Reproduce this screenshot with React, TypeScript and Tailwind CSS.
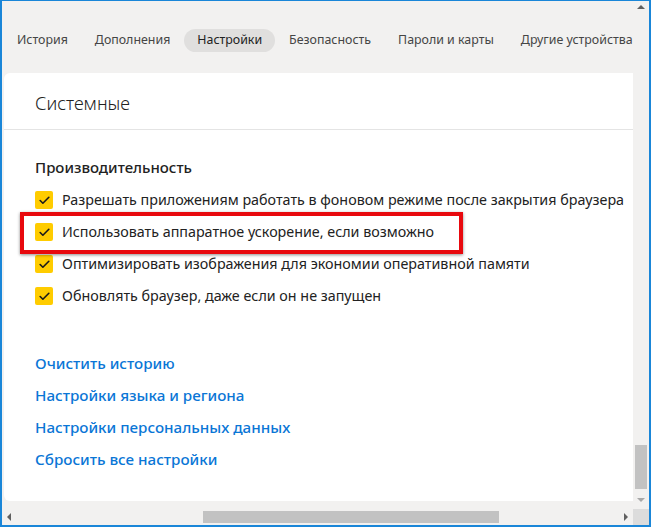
import { Check } from 'lucide-react';

const tabs = ['История', 'Дополнения', 'Настройки', 'Безопасность', 'Пароли и карты', 'Другие устройства'];

const options = [
  'Разрешать приложениям работать в фоновом режиме после закрытия браузера',
  'Использовать аппаратное ускорение, если возможно',
  'Оптимизировать изображения для экономии оперативной памяти',
  'Обновлять браузер, даже если он не запущен',
];

const links = [
  'Очистить историю',
  'Настройки языка и региона',
  'Настройки персональных данных',
  'Сбросить все настройки',
];

export default function App() {
  return (
    <div
      className="relative w-[651px] h-[527px] overflow-hidden bg-[#f2f1f0] border-l-2 border-r-2 border-t border-b-2 border-[#1a86d8] grid grid-cols-[1fr_16px] grid-rows-[1fr_16px]"
      style={{ fontFamily: '"Noto Sans", "Open Sans", sans-serif' }}
    >
      {/* Scrollable content */}
      <div className="flex flex-col min-h-0 min-w-0 overflow-hidden">
        {/* Tabs */}
        <nav className="flex items-center gap-[1px] h-[72px] pl-[2px] pt-[6px] text-[12.4px] text-[#454545] whitespace-nowrap">
          {tabs.map((t) => (
            <div
              key={t}
              className={`px-[13px] h-[23px] flex items-center rounded-full ${
                t === 'Настройки' ? 'bg-[#e0dfde] text-[#222]' : ''
              }`}
            >
              {t}
            </div>
          ))}
        </nav>

        {/* Card */}
        <div className="ml-[2px] mb-[8px] flex-1 bg-white rounded-l-[6px] flex flex-col">
          <div className="h-[56px] flex items-center pt-[4px] pl-[31px] text-[18px] font-light text-[#222]">
            Системные
          </div>
          <div className="h-px bg-[#e4e4e4]" />

          <div className="pl-[31px] pt-[25px]">
            <div className="text-[15px] font-medium text-[#222] h-[24px] flex items-center">
              Производительность
            </div>
            <div className="mt-[5px] flex flex-col">
              {options.map((o) => (
                <div key={o} className="h-[32px] flex items-center gap-[9px] text-[14.3px] text-[#222] whitespace-nowrap">
                  <div className="w-[18px] h-[18px] rounded-[2px] bg-[#ffcc00] flex items-center justify-center shrink-0">
                    <Check size={13} strokeWidth={3} color="#1a1a1a" />
                  </div>
                  {o}
                </div>
              ))}
            </div>

            <div className="mt-[35px] flex flex-col">
              {links.map((l) => (
                <div key={l} className="h-[32px] flex items-center text-[15.2px] font-medium text-[#0a76d6]">
                  {l}
                </div>
              ))}
            </div>
          </div>
        </div>
      </div>

      {/* Vertical scrollbar */}
      <div className="flex flex-col items-center">
        <div className="h-[12px] flex items-center justify-center">
          <svg width="8" height="4" viewBox="0 0 8 4"><polygon points="0,4 8,4 4,0" fill="#606060" /></svg>
        </div>
        <div className="flex-1 w-full flex flex-col justify-end px-[2px]">
          <div className="h-[44px] bg-[#c2c2c2] mb-[8px]" />
        </div>
        <div className="h-[12px] flex items-start justify-center pt-[1px]">
          <svg width="8" height="4" viewBox="0 0 8 4"><polygon points="0,0 8,0 4,4" fill="#a8a8a8" /></svg>
        </div>
      </div>

      {/* Horizontal scrollbar */}
      <div className="flex items-center">
        <div className="w-[14px] flex justify-center">
          <svg width="4" height="8" viewBox="0 0 4 8"><polygon points="4,0 4,8 0,4" fill="#606060" /></svg>
        </div>
        <div className="flex-1 h-full flex items-center py-[2px]">
          <div className="ml-[187px] w-[296px] h-full bg-[#c2c2c2]" />
        </div>
        <div className="w-[14px] flex justify-center">
          <svg width="4" height="8" viewBox="0 0 4 8"><polygon points="0,0 0,8 4,4" fill="#606060" /></svg>
        </div>
      </div>
      <div className="bg-[#dcdcdc]" />

      {/* Annotation frame */}
      <div className="absolute left-[18px] top-[211px] w-[443px] h-[42px] border-[4px] border-[#e8090e] shadow-[0_1px_3px_rgba(0,0,0,0.45)] pointer-events-none" />
    </div>
  );
}
